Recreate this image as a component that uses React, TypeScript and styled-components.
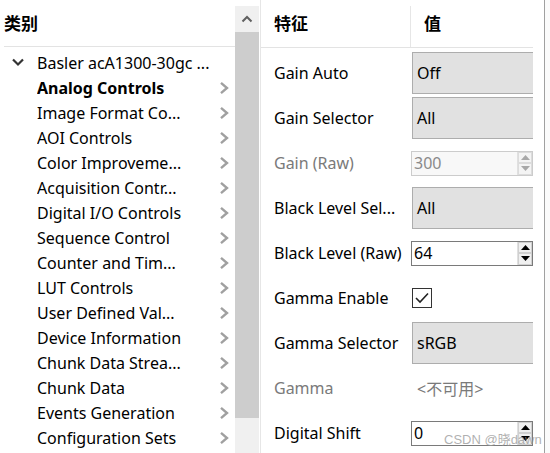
import React from "react";
import styled, { createGlobalStyle } from "styled-components";

const Global = createGlobalStyle`
  html, body { margin: 0; padding: 0; background: #ffffff; }
  body { font-family: "Noto Sans", "Noto Sans CJK SC", sans-serif; }
  * { box-sizing: border-box; }
`;

const FONT = `"Noto Sans", "Noto Sans CJK SC", sans-serif`;

const Root = styled.div`
  width: 550px;
  height: 453px;
  display: flex;
  overflow: hidden;
  background: #fff;
  position: relative;
  font-family: ${FONT};
  color: #000;
`;

const LeftPanel = styled.div`
  width: 261px;
  flex: none;
  display: flex;
  border-right: 1px solid #e6e6e6;
`;

const TreeArea = styled.div`
  width: 235px;
  flex: none;
  padding-top: 6px;
`;

const HeaderCell = styled.div<{ $w?: number; $divider?: boolean }>`
  height: 41px;
  display: flex;
  align-items: center;
  font-weight: 700;
  font-size: 17px;
  ${(p) => (p.$w ? `width: ${p.$w}px; flex: none;` : "flex: 1;")}
  ${(p) => (p.$divider ? "border-right: 1px solid #e6e6e6;" : "")}
  padding-left: 13px;
  padding-bottom: 8px;
`;

const TreeHeader = styled.div`
  height: 41px;
  margin-left: 4px;
  border-bottom: 1px solid #e3e3e3;
  display: flex;
  align-items: center;
  font-weight: 700;
  font-size: 17px;
  padding-bottom: 8px;
`;

const TreeList = styled.div`
  padding-top: 3px;
  display: flex;
  flex-direction: column;
`;

const TreeRow = styled.div<{ $bold?: boolean }>`
  height: 25px;
  display: flex;
  align-items: center;
  font-size: 16px;
  font-weight: ${(p) => (p.$bold ? 700 : 400)};
  white-space: nowrap;
`;

const Toggle = styled.span`
  width: 37px;
  flex: none;
  display: flex;
  align-items: center;
  padding-left: 12px;
`;

const TreeLabel = styled.span`
  flex: 1;
  overflow: hidden;
`;

const ChevronCell = styled.span`
  width: 16px;
  flex: none;
  display: flex;
  align-items: center;
  justify-content: flex-start;
`;

const Scrollbar = styled.div`
  width: 24px;
  flex: none;
  margin-top: 6px;
  background: #f0f0f0;
  display: flex;
  flex-direction: column;
`;

const ScrollArrow = styled.div`
  height: 26px;
  display: flex;
  align-items: center;
  justify-content: center;
`;

const ScrollThumb = styled.div`
  height: 386px;
  background: #cdcdcd;
`;

const RightPanel = styled.div`
  width: 284px;
  flex: none;
  display: flex;
  border-right: 1px solid #a0a0a0;
`;

const Grid = styled.div`
  width: 272px;
  flex: none;
  padding-top: 6px;
  overflow: hidden;
`;

const GridHeader = styled.div`
  display: flex;
  border-bottom: 1px solid #e3e3e3;
`;

const GridBody = styled.div`
  padding-top: 1px;
`;

const GridRow = styled.div`
  height: 45px;
  padding-top: 3px;
  display: flex;
  align-items: center;
`;

const PropLabel = styled.div<{ $disabled?: boolean }>`
  width: 150px;
  flex: none;
  padding-left: 13px;
  font-size: 16px;
  white-space: nowrap;
  color: ${(p) => (p.$disabled ? "#7a7a7a" : "#000")};
`;

const ValueCell = styled.div`
  width: 140px;
  flex: none;
  height: 42px;
  display: flex;
  align-items: center;
`;

const Combo = styled.div`
  width: 140px;
  height: 42px;
  margin-left: 1px;
  background: #e1e1e1;
  border: 1px solid #adadad;
  display: flex;
  align-items: center;
  padding-left: 4px;
  font-size: 16px;
`;

const Spin = styled.div<{ $disabled?: boolean }>`
  width: 122px;
  height: 25px;
  border: 1px solid ${(p) => (p.$disabled ? "#cccccc" : "#7a7a7a")};
  background: ${(p) => (p.$disabled ? "#f8f8f8" : "#fff")};
  color: ${(p) => (p.$disabled ? "#8a8a8a" : "#000")};
  display: flex;
  align-items: center;
  font-size: 16px;
`;

const SpinText = styled.span`
  flex: 1;
  padding-left: 2px;
`;

const SpinButtons = styled.div`
  width: 15px;
  height: 100%;
  display: flex;
  flex-direction: column;
  border-left: 1px solid #e0e0e0;
`;

const SpinBtn = styled.div<{ $disabled?: boolean }>`
  flex: 1;
  display: flex;
  align-items: center;
  justify-content: center;
  background: ${(p) => (p.$disabled ? "#f4f4f4" : "#f0f0f0")};
  border: 1px solid ${(p) => (p.$disabled ? "#dcdcdc" : "#d0d0d0")};
`;

const Check = styled.div`
  width: 20px;
  height: 20px;
  margin-left: 1px;
  border: 1px solid #333;
  background: #fff;
  display: flex;
  align-items: center;
  justify-content: center;
`;

const NA = styled.div`
  padding-left: 6px;
  font-size: 16px;
  color: #7a7a7a;
`;

const Gutter = styled.div`
  flex: 1;
`;

const Edge = styled.div`
  flex: 1;
  background: #fbfbfb;
`;

const Watermark = styled.div`
  position: absolute;
  left: 444px;
  top: 429px;
  font-family: "Liberation Sans", "Noto Sans CJK SC", sans-serif;
  font-size: 13px;
  color: rgba(150, 150, 150, 0.75);
  white-space: nowrap;
  pointer-events: none;
`;

const ChevronRight = ({ color = "#a0a0a0" }: { color?: string }) => (
  <svg width="11" height="14" viewBox="0 0 11 14">
    <path d="M2 1.8 L8 7 L2 12.2" fill="none" stroke={color} strokeWidth="2.4" />
  </svg>
);

const ChevronDown = () => (
  <svg width="12" height="9" viewBox="0 0 12 9">
    <path d="M1 1.5 L6 6.5 L11 1.5" fill="none" stroke="#333" strokeWidth="2.2" />
  </svg>
);

const ChevronUp = () => (
  <svg width="12" height="8" viewBox="0 0 12 8">
    <path d="M1.5 6.5 L6 2 L10.5 6.5" fill="none" stroke="#606060" strokeWidth="2" />
  </svg>
);

const Tri = ({ up, color }: { up?: boolean; color: string }) => (
  <svg width="9" height="5" viewBox="0 0 9 5">
    <path d={up ? "M0 5 L4.5 0 L9 5 Z" : "M0 0 L4.5 5 L9 0 Z"} fill={color} />
  </svg>
);

const CheckMark = () => (
  <svg width="16" height="14" viewBox="0 0 16 14">
    <path d="M2 7 L6 11 L14 2.5" fill="none" stroke="#222" strokeWidth="1.6" />
  </svg>
);

const categories = [
  "Analog Controls",
  "Image Format Co...",
  "AOI Controls",
  "Color Improveme...",
  "Acquisition Contr...",
  "Digital I/O Controls",
  "Sequence Control",
  "Counter and Tim...",
  "LUT Controls",
  "User Defined Val...",
  "Device Information",
  "Chunk Data Strea...",
  "Chunk Data",
  "Events Generation",
  "Configuration Sets",
];

type Prop =
  | { label: string; kind: "combo"; value: string }
  | { label: string; kind: "spin"; value: string; disabled?: boolean }
  | { label: string; kind: "check" }
  | { label: string; kind: "na" };

const props: Prop[] = [
  { label: "Gain Auto", kind: "combo", value: "Off" },
  { label: "Gain Selector", kind: "combo", value: "All" },
  { label: "Gain (Raw)", kind: "spin", value: "300", disabled: true },
  { label: "Black Level Sel...", kind: "combo", value: "All" },
  { label: "Black Level (Raw)", kind: "spin", value: "64" },
  { label: "Gamma Enable", kind: "check" },
  { label: "Gamma Selector", kind: "combo", value: "sRGB" },
  { label: "Gamma", kind: "na" },
  { label: "Digital Shift", kind: "spin", value: "0" },
];

const SpinBox = ({ value, disabled }: { value: string; disabled?: boolean }) => {
  const c = disabled ? "#a8a8a8" : "#000";
  return (
    <Spin $disabled={disabled}>
      <SpinText>{value}</SpinText>
      <SpinButtons>
        <SpinBtn $disabled={disabled}>
          <Tri up color={c} />
        </SpinBtn>
        <SpinBtn $disabled={disabled}>
          <Tri color={c} />
        </SpinBtn>
      </SpinButtons>
    </Spin>
  );
};

export default function App() {
  return (
    <>
      <Global />
      <Root>
        <LeftPanel>
          <TreeArea>
            <TreeHeader>类别</TreeHeader>
            <TreeList>
              <TreeRow>
                <Toggle>
                  <ChevronDown />
                </Toggle>
                <TreeLabel>Basler acA1300-30gc ...</TreeLabel>
              </TreeRow>
              {categories.map((c, i) => (
                <TreeRow key={c} $bold={i === 0}>
                  <Toggle />
                  <TreeLabel>{c}</TreeLabel>
                  <ChevronCell>
                    <ChevronRight />
                  </ChevronCell>
                </TreeRow>
              ))}
            </TreeList>
          </TreeArea>
          <Scrollbar>
            <ScrollArrow>
              <ChevronUp />
            </ScrollArrow>
            <ScrollThumb />
          </Scrollbar>
        </LeftPanel>
        <RightPanel>
          <Grid>
            <GridHeader>
              <HeaderCell $w={150} $divider>
                特征
              </HeaderCell>
              <HeaderCell>值</HeaderCell>
            </GridHeader>
            <GridBody>
              {props.map((p) => (
                <GridRow key={p.label}>
                  <PropLabel $disabled={p.kind === "na" || (p.kind === "spin" && p.disabled)}>
                    {p.label}
                  </PropLabel>
                  <ValueCell>
                    {p.kind === "combo" && <Combo>{p.value}</Combo>}
                    {p.kind === "spin" && <SpinBox value={p.value} disabled={p.disabled} />}
                    {p.kind === "check" && (
                      <Check>
                        <CheckMark />
                      </Check>
                    )}
                    {p.kind === "na" && <NA>&lt;不可用&gt;</NA>}
                  </ValueCell>
                </GridRow>
              ))}
            </GridBody>
          </Grid>
          <Gutter />
        </RightPanel>
        <Edge />
        <Watermark>CSDN @晓dawn</Watermark>
      </Root>
    </>
  );
}
